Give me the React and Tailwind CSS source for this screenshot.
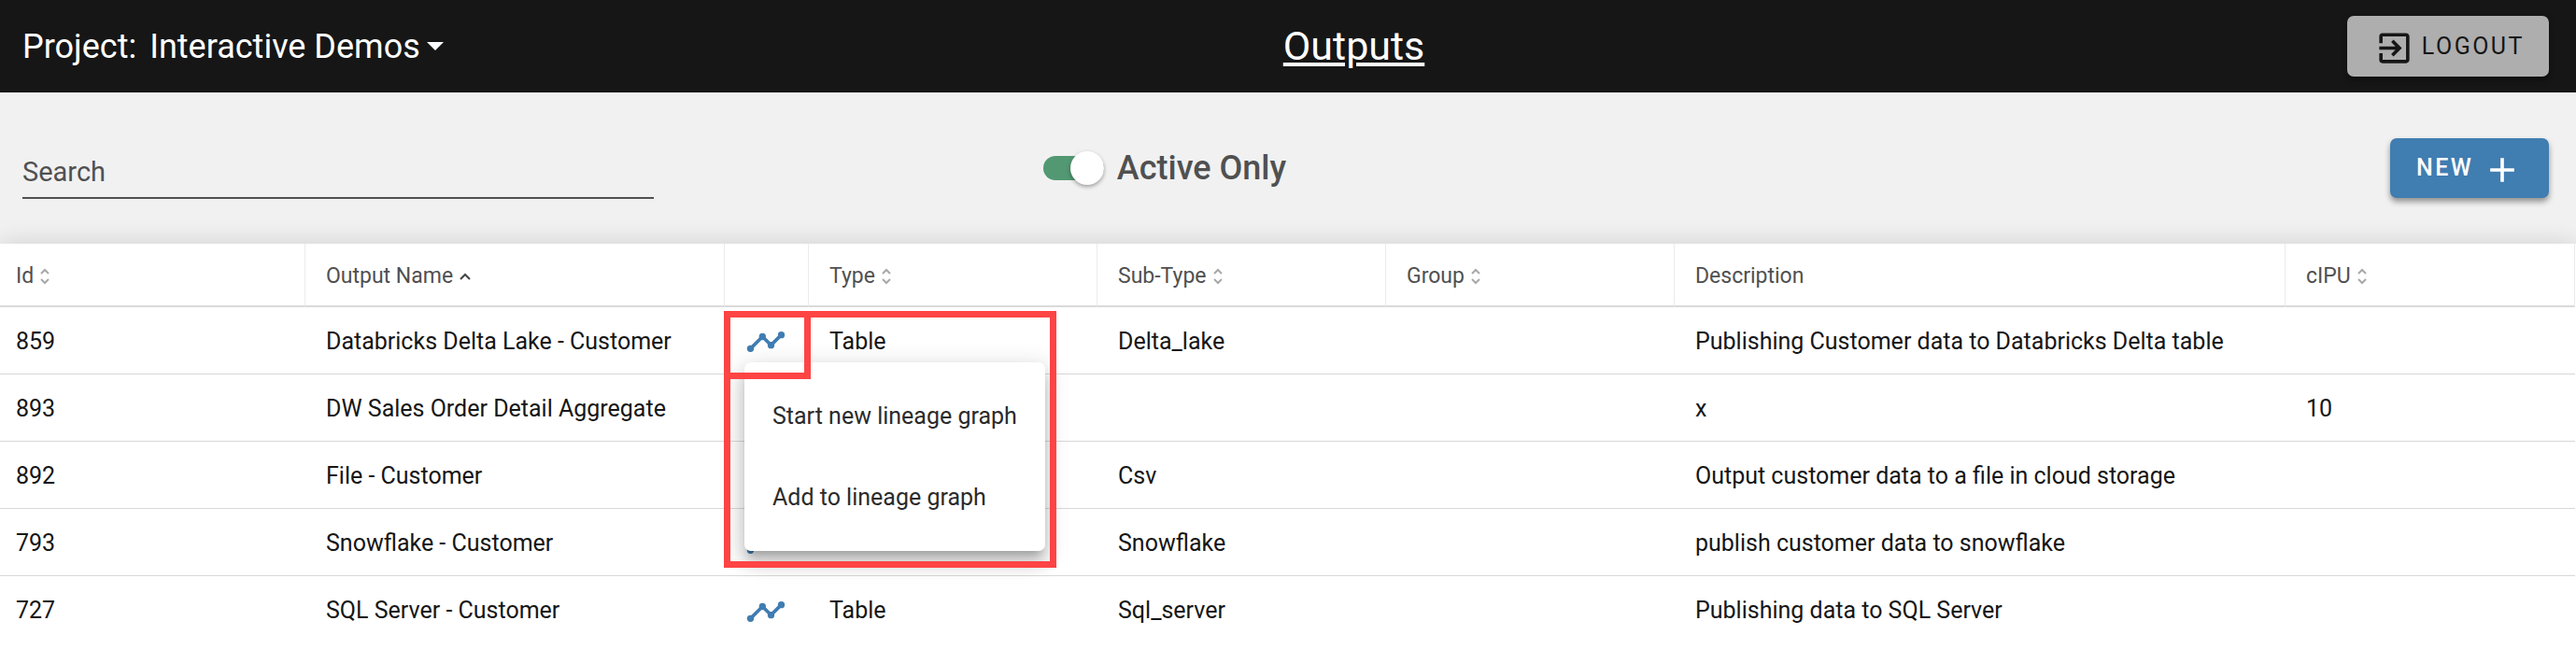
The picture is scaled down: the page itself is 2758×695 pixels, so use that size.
import { useState } from "react";
import { MdAdd, MdExitToApp } from "react-icons/md";

const columns = [
  { key: "id", label: "Id", width: "w-[327px]", sort: "both" },
  { key: "name", label: "Output Name", width: "w-[449px]", sort: "asc" },
  { key: "lineage", label: "", width: "w-[90px]" },
  { key: "type", label: "Type", width: "w-[309px]", sort: "both" },
  { key: "subType", label: "Sub-Type", width: "w-[309px]", sort: "both" },
  { key: "group", label: "Group", width: "w-[309px]", sort: "both" },
  { key: "description", label: "Description", width: "w-auto" },
  { key: "cipu", label: "cIPU", width: "w-[310px]", sort: "both" },
];

const outputs = [
  {
    id: 859,
    name: "Databricks Delta Lake - Customer",
    type: "Table",
    subType: "Delta_lake",
    description: "Publishing Customer data to Databricks Delta table",
  },
  {
    id: 893,
    name: "DW Sales Order Detail Aggregate",
    description: "x",
    cipu: "10",
  },
  {
    id: 892,
    name: "File - Customer",
    subType: "Csv",
    description: "Output customer data to a file in cloud storage",
  },
  {
    id: 793,
    name: "Snowflake - Customer",
    type: "Table",
    subType: "Snowflake",
    description: "publish customer data to snowflake",
  },
  {
    id: 727,
    name: "SQL Server - Customer",
    type: "Table",
    subType: "Sql_server",
    description: "Publishing data to SQL Server",
  },
];

function SortIcon({ sort }) {
  if (sort === "asc") {
    return (
      <svg className="h-2 w-3" viewBox="0 0 12 8" fill="none" stroke="#444" strokeWidth="2">
        <path d="M1 7l5-5 5 5" />
      </svg>
    );
  }
  return (
    <svg className="h-[18px] w-[10px]" viewBox="0 0 10 18" fill="none" stroke="#a8a8a8" strokeWidth="2">
      <path d="M1 6l4-4 4 4M1 12l4 4 4-4" />
    </svg>
  );
}

function LineageIcon() {
  return (
    <svg className="size-11 text-[#407db1]" viewBox="0 0 24 24" fill="currentColor">
      <path d="M3 16l7-7 5 5 6-6" fill="none" stroke="currentColor" strokeWidth="2" />
      <circle cx="3" cy="16" r="2" />
      <circle cx="10" cy="9" r="2" />
      <circle cx="15" cy="14" r="2" />
      <circle cx="21" cy="8" r="2" />
    </svg>
  );
}

function Header() {
  return (
    <header className="flex h-[99px] items-center bg-[#161616] pl-6 pr-[29px] text-white">
      <div className="flex w-[49.9%] items-center gap-[14px] text-[36px]">
        <span>Project:</span>
        <button type="button" aria-haspopup="listbox" className="flex items-center gap-[7px]">
          Interactive Demos
          <svg className="h-[9px] w-[18px]" viewBox="0 0 18 9" fill="currentColor">
            <path d="M0 0h18L9 9z" />
          </svg>
        </button>
      </div>
      <h1 className="text-[43px] underline">Outputs</h1>
      <button
        type="button"
        className="ml-auto flex h-[65px] w-[216px] items-center justify-end gap-2 rounded-[7px] bg-[#aeaeae] pr-[26px] text-[25px] tracking-widest text-[#161616] shadow-[0_4px_6px_rgba(0,0,0,0.4)]"
      >
        <MdExitToApp className="mt-1 size-[43px]" />
        LOGOUT
      </button>
    </header>
  );
}

function Toolbar() {
  const [activeOnly, setActiveOnly] = useState(true);

  return (
    <div className="flex h-[162px] items-center bg-[#f1f1f1] pl-6 pr-[29px]">
      <input
        type="text"
        aria-label="Search"
        placeholder="Search"
        className="h-[66px] w-1/4 border-b-2 border-[#505050] pt-[10px] text-[29px] text-[#161616] outline-none placeholder:text-[#505050]"
      />
      <label className="ml-[15.4%] flex items-center gap-[14px] text-[36px] font-medium text-[#505050]">
        <span className="relative flex h-[26px] w-[65px] items-center justify-end">
          <input
            type="checkbox"
            role="switch"
            checked={activeOnly}
            onChange={() => setActiveOnly(!activeOnly)}
            className="absolute inset-0 appearance-none rounded-full bg-gray-400 checked:bg-[#529872]"
          />
          <span className="pointer-events-none relative size-9 shrink-0 rounded-full bg-white shadow-[0_2px_4px_rgba(0,0,0,0.35)]" />
        </span>
        Active Only
      </label>
      <button
        type="button"
        className="ml-auto flex h-16 w-[170px] items-center gap-[9px] rounded-[7px] bg-[#407db1] pl-7 text-[25px] font-medium tracking-widest text-white shadow-[0_4px_6px_rgba(0,0,0,0.4)]"
      >
        NEW
        <MdAdd className="mt-[3px] size-11" />
      </button>
    </div>
  );
}

// Menu opened from the lineage icon, with the two highlight frames over it
function LineageMenu() {
  return (
    <>
      <div
        role="menu"
        className="absolute left-[21px] top-[59px] z-10 w-[322px] rounded-[7px] bg-white py-[14px] text-[25px] text-[#2b2b2b] shadow-[0_9px_9px_-5px_rgba(0,0,0,0.2),0_14px_18px_2px_rgba(0,0,0,0.14),0_5px_25px_4px_rgba(0,0,0,0.12)]"
      >
        <button type="button" role="menuitem" className="block h-[87px] w-full pl-[30px] text-left">
          Start new lineage graph
        </button>
        <button type="button" role="menuitem" className="block h-[87px] w-full pl-[30px] text-left">
          Add to lineage graph
        </button>
      </div>
      <div className="pointer-events-none absolute -left-px top-1 z-20 h-[275px] w-[356px] border-[7px] border-[#ff4444]" />
      <div className="pointer-events-none absolute -left-px top-1 z-20 h-[73px] w-[93px] border-[7px] border-[#ff4444]" />
    </>
  );
}

function OutputsTable() {
  return (
    <div className="relative grow bg-white pr-px shadow-[0_0_26px_rgba(0,0,0,0.14)]">
      <table className="w-full table-fixed border-separate border-spacing-0 text-left">
        <thead>
          <tr className="h-[68px] text-[23px] text-[#505050]">
            {columns.map((col) => (
              <th
                key={col.key}
                scope="col"
                className={`${col.width} border-b-2 border-r border-b-[#dadada] border-r-[#ebebeb] pt-1 pl-[22px] font-normal first:pl-[17px]`}
              >
                {col.sort ? (
                  <button type="button" className="flex items-center gap-[7px]">
                    {col.label}
                    <SortIcon sort={col.sort} />
                  </button>
                ) : (
                  col.label
                )}
              </th>
            ))}
          </tr>
        </thead>
        <tbody className="text-[25px] text-[#161616]">
          {outputs.map((row, i) => (
            <tr key={row.id} className="group h-[72px]">
              {columns.map((col) => (
                <td
                  key={col.key}
                  className="relative border-b border-[#d8d8d8] pt-[2px] pl-[22px] first:pl-[17px] group-last:border-b-0"
                >
                  {col.key === "lineage" ? (
                    <>
                      <button type="button" aria-label="Lineage" className="block pt-px">
                        <LineageIcon />
                      </button>
                      {i === 0 && <LineageMenu />}
                    </>
                  ) : (
                    row[col.key]
                  )}
                </td>
              ))}
            </tr>
          ))}
        </tbody>
      </table>
    </div>
  );
}

export default function App() {
  return (
    <div className="flex min-h-screen flex-col bg-white font-[Roboto,sans-serif]">
      <Header />
      <Toolbar />
      <OutputsTable />
    </div>
  );
}
